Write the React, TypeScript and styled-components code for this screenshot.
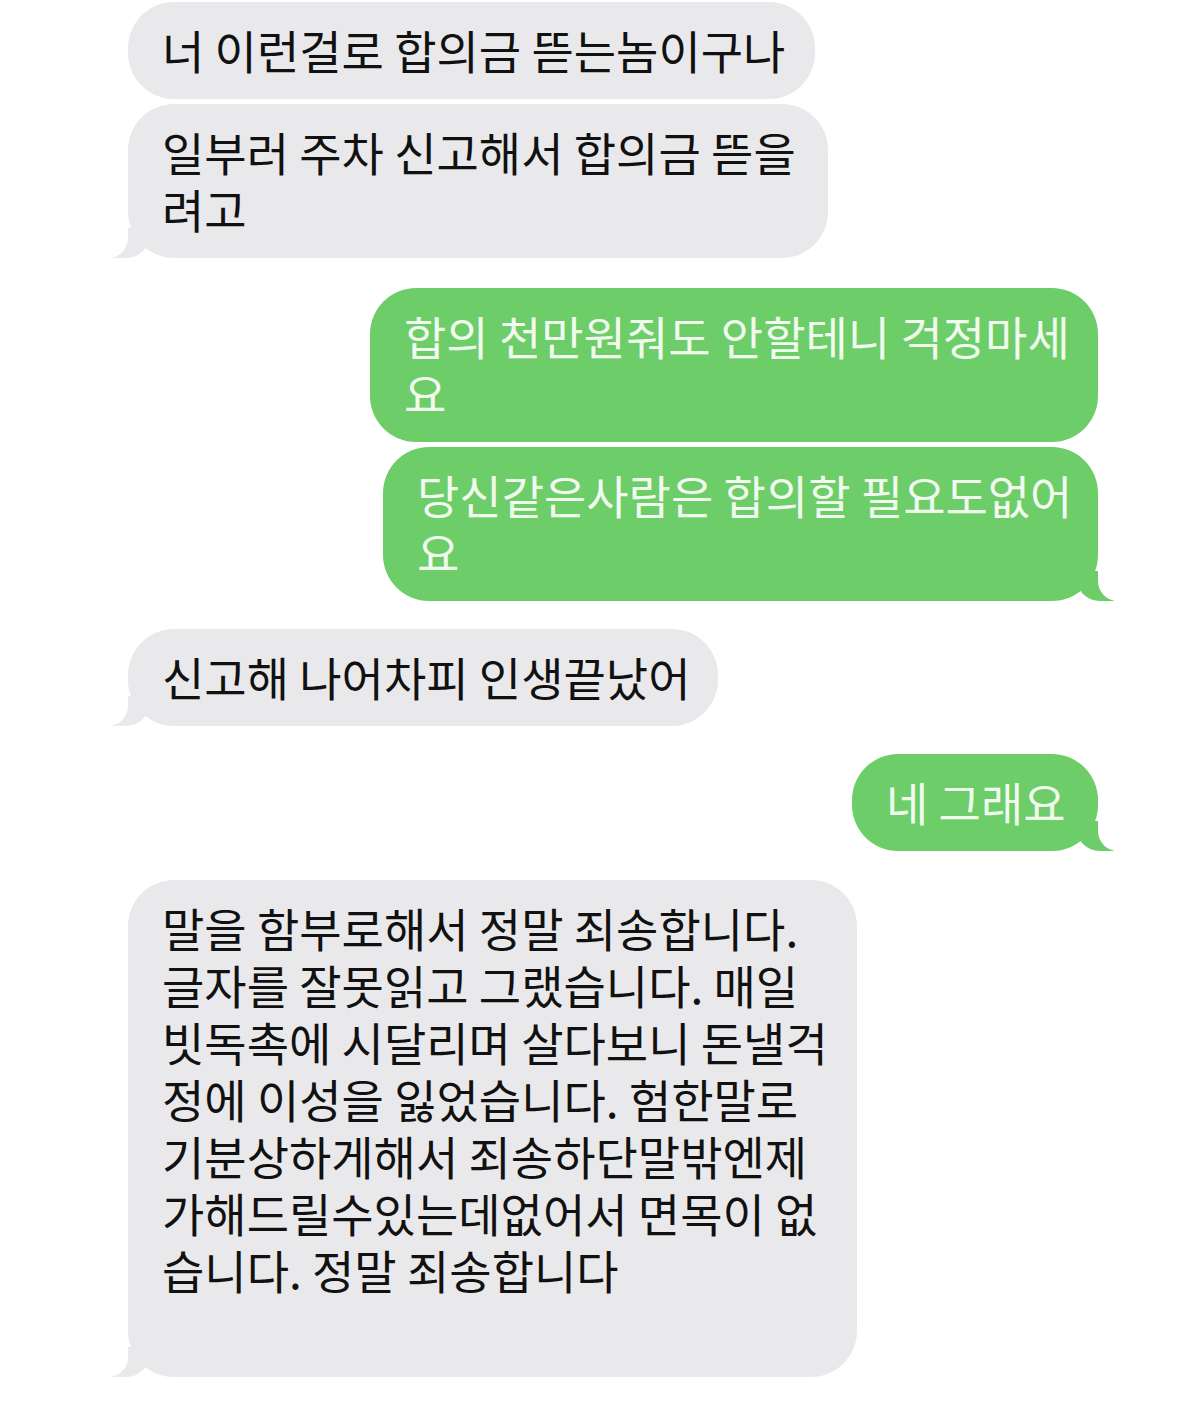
import styled, { createGlobalStyle, css } from 'styled-components'

type Side = 'them' | 'me'

interface Message {
  from: Side
  width: number
  space: number
  tail?: boolean
  extraBottom?: number
  lines: string[]
}

const GRAY = '#e9e9eb'
const GREEN = '#6dcd68'

const messages: Message[] = [
  { from: 'them', width: 687, space: 0, lines: ['너 이런걸로 합의금 뜯는놈이구나'] },
  { from: 'them', width: 700, space: 5, tail: true, lines: ['일부러 주차 신고해서 합의금 뜯을', '려고'] },
  { from: 'me', width: 728, space: 30, lines: ['합의 천만원줘도 안할테니 걱정마세', '요'] },
  { from: 'me', width: 715, space: 5, tail: true, lines: ['당신같은사람은 합의할 필요도없어', '요'] },
  { from: 'them', width: 590, space: 28, tail: true, lines: ['신고해 나어차피 인생끝났어'] },
  { from: 'me', width: 246, space: 28, tail: true, lines: ['네 그래요'] },
  {
    from: 'them',
    width: 729,
    space: 29,
    tail: true,
    extraBottom: 58,
    lines: [
      '말을 함부로해서 정말 죄송합니다.',
      '글자를 잘못읽고 그랬습니다. 매일',
      '빗독촉에 시달리며 살다보니 돈낼걱',
      '정에 이성을 잃었습니다. 험한말로',
      '기분상하게해서 죄송하단말밖엔제',
      '가해드릴수있는데없어서 면목이 없',
      '습니다. 정말 죄송합니다'
    ]
  }
]

const GlobalStyle = createGlobalStyle`
  body {
    margin: 0;
    background: #fff;
    font-family: "Noto Sans CJK KR", "Noto Sans", sans-serif;
  }
`

const Thread = styled.div`
  width: 1179px;
  min-height: 1403px;
  box-sizing: border-box;
  padding: 2px 81px 0 128px;
  display: flex;
  flex-direction: column;
`

const tailLeft = (bg: string) => css`
  &::before {
    content: '';
    position: absolute;
    z-index: -1;
    bottom: 0;
    left: -16px;
    width: 38px;
    height: 30px;
    background: ${bg};
    border-bottom-right-radius: 24px;
  }
  &::after {
    content: '';
    position: absolute;
    z-index: -1;
    bottom: 0;
    left: -40px;
    width: 40px;
    height: 30px;
    background: #fff;
    border-bottom-right-radius: 20px;
  }
`

const tailRight = (bg: string) => css`
  &::before {
    content: '';
    position: absolute;
    z-index: -1;
    bottom: 0;
    right: -16px;
    width: 38px;
    height: 30px;
    background: ${bg};
    border-bottom-left-radius: 24px;
  }
  &::after {
    content: '';
    position: absolute;
    z-index: -1;
    bottom: 0;
    right: -40px;
    width: 40px;
    height: 30px;
    background: #fff;
    border-bottom-left-radius: 20px;
  }
`

const Bubble = styled.div<{ $from: Side; $width: number; $space: number; $tail?: boolean; $extra?: number }>`
  position: relative;
  isolation: isolate;
  box-sizing: border-box;
  width: ${p => p.$width}px;
  margin-top: ${p => p.$space}px;
  padding: 19px 18px ${p => 21 + (p.$extra || 0)}px 34px;
  border-radius: 46px;
  font-size: 46px;
  line-height: 57px;
  white-space: nowrap;
  align-self: ${p => (p.$from === 'me' ? 'flex-end' : 'flex-start')};
  background: ${p => (p.$from === 'me' ? GREEN : GRAY)};
  color: ${p => (p.$from === 'me' ? '#f1faee' : '#111')};
  ${p => p.$tail && (p.$from === 'me' ? tailRight(GREEN) : tailLeft(GRAY))}
`

const Line = styled.span`
  display: block;
`

export default function App () {
  return (
    <>
      <GlobalStyle />
      <Thread>
        {messages.map((m, i) => (
          <Bubble key={i} $from={m.from} $width={m.width} $space={m.space} $tail={m.tail} $extra={m.extraBottom}>
            {m.lines.map((l, j) => <Line key={j}>{l}</Line>)}
          </Bubble>
        ))}
      </Thread>
    </>
  )
}
